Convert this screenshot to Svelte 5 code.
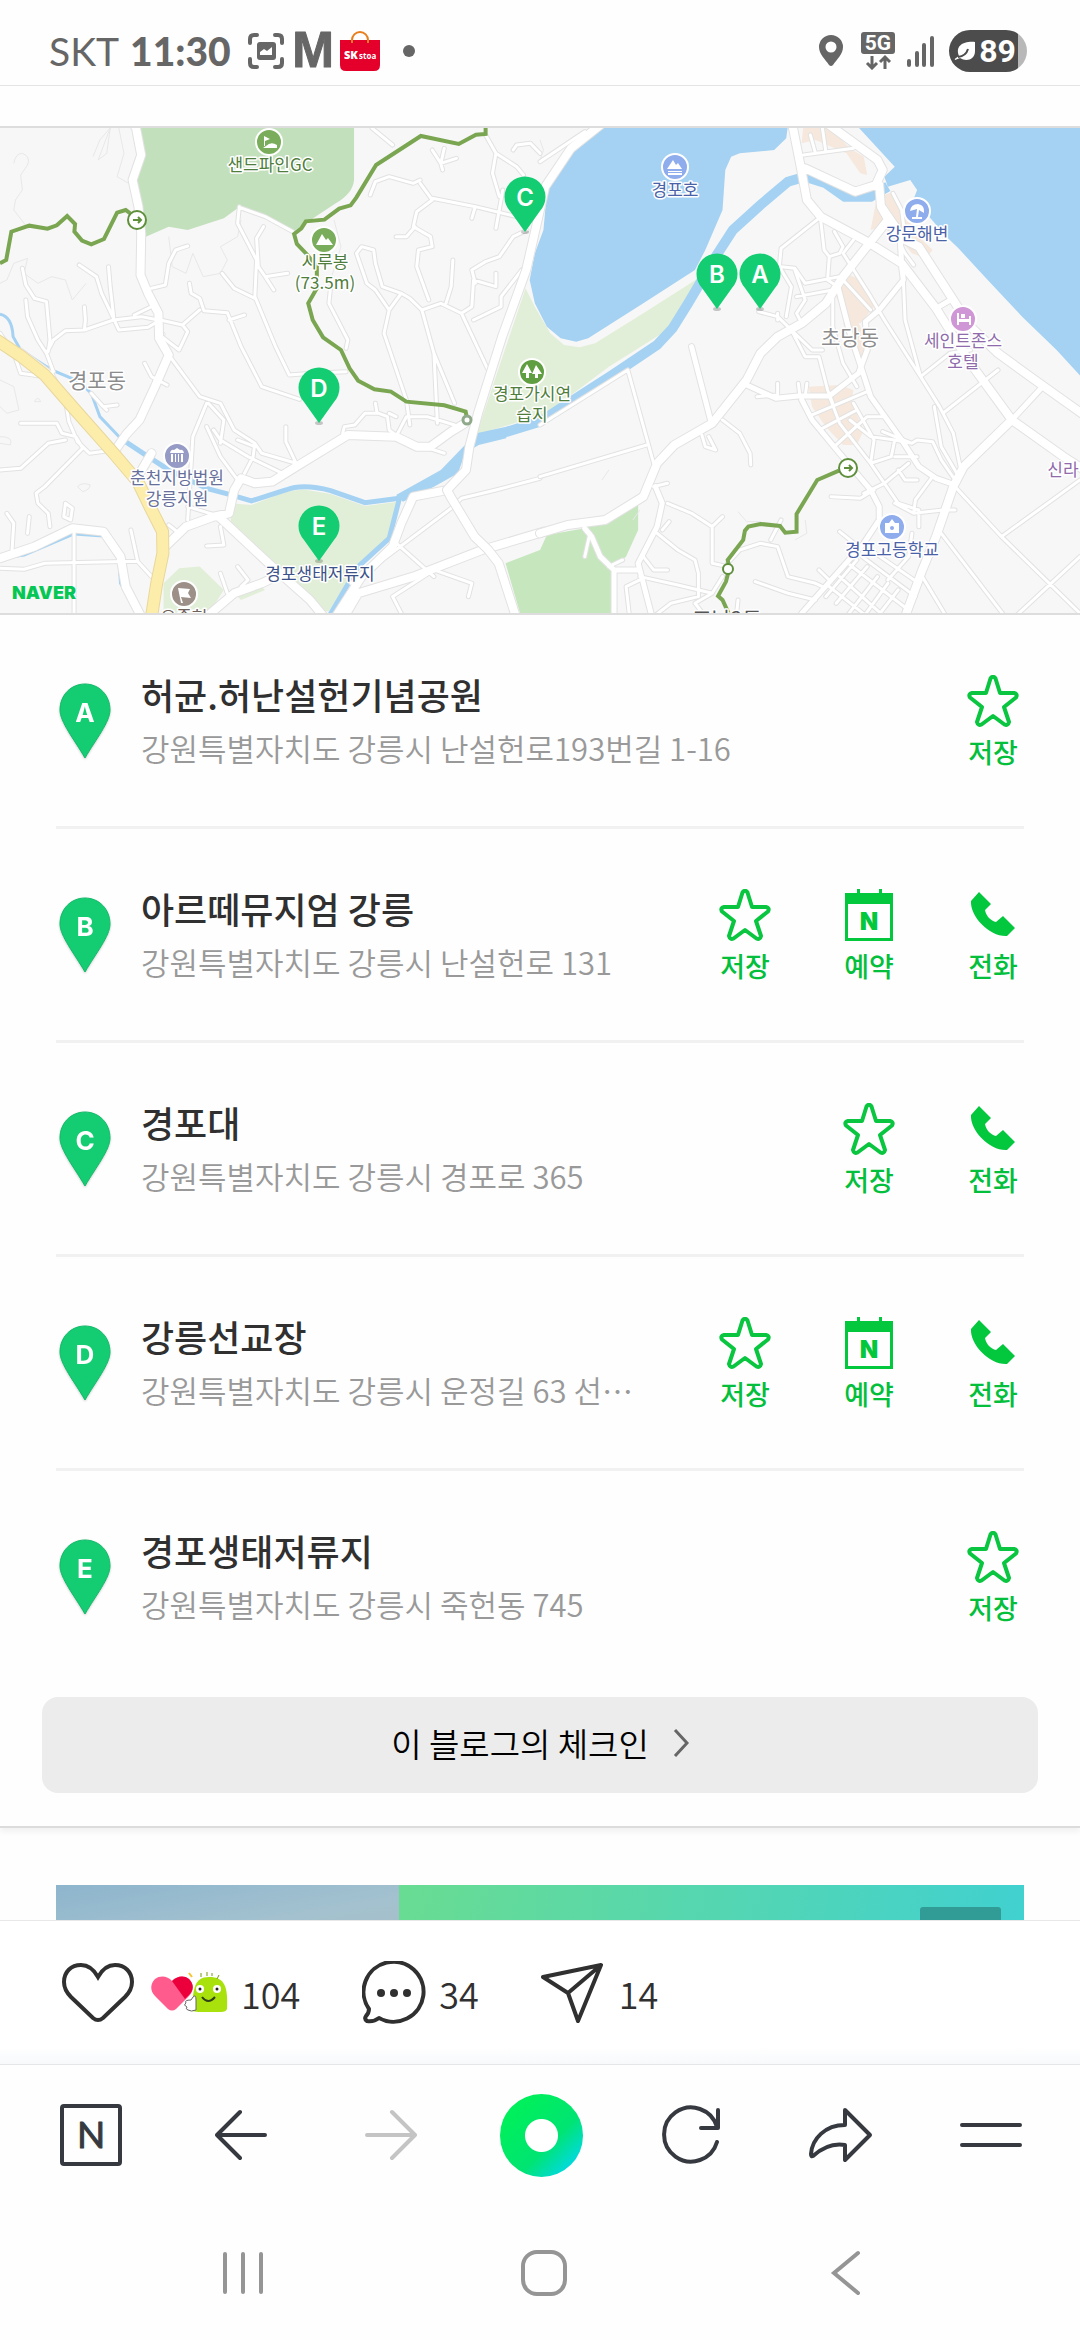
<script>
  /** Checked-in places of the post; each one also has a lettered pin on the map. */
  const places = [
    { id: 'A', name: '허균.허난설헌기념공원', address: '강원특별자치도 강릉시 난설헌로193번길 1-16', actions: ['save'] },
    { id: 'B', name: '아르떼뮤지엄 강릉', address: '강원특별자치도 강릉시 난설헌로 131', actions: ['save', 'book', 'call'] },
    { id: 'C', name: '경포대', address: '강원특별자치도 강릉시 경포로 365', actions: ['save', 'call'] },
    { id: 'D', name: '강릉선교장', address: '강원특별자치도 강릉시 운정길 63 선⋯', actions: ['save', 'book', 'call'] },
    { id: 'E', name: '경포생태저류지', address: '강원특별자치도 강릉시 죽헌동 745', actions: ['save'] },
  ];

  const actionLabels = { save: '저장', book: '예약', call: '전화' };

  const pins = [
    { id: 'C', x: 525, y: 112 },
    { id: 'B', x: 717, y: 189 },
    { id: 'A', x: 760, y: 189 },
    { id: 'D', x: 319, y: 303 },
    { id: 'E', x: 319, y: 441 },
  ];

  const labels = [
    { text: '샌드파인GC', x: 270, y: 51, kind: 'park' },
    { text: '시루봉', x: 325, y: 148, kind: 'park' },
    { text: '(73.5m)', x: 325, y: 169, kind: 'park' },
    { text: '경포가시연', x: 532, y: 280, kind: 'park' },
    { text: '습지', x: 532, y: 301, kind: 'park' },
    { text: '경포호', x: 675, y: 76, kind: 'water' },
    { text: '강문해변', x: 917, y: 120, kind: 'water' },
    { text: '경포고등학교', x: 892, y: 436, kind: 'water' },
    { text: '경포생태저류지', x: 320, y: 460, kind: 'navy' },
    { text: '춘천지방법원', x: 177, y: 364, kind: 'civic' },
    { text: '강릉지원', x: 177, y: 385, kind: 'civic' },
    { text: '세인트존스', x: 963, y: 227, kind: 'hotel' },
    { text: '호텔', x: 963, y: 248, kind: 'hotel' },
    { text: '신라', x: 1063, y: 356, kind: 'hotel' },
    { text: '오죽헌', x: 184, y: 503, kind: 'brown' },
    { text: '경포동', x: 97, y: 268, kind: 'area' },
    { text: '초당동', x: 850, y: 225, kind: 'area' },
    { text: '포남2동', x: 727, y: 507, kind: 'area dark' },
  ];

  // The two map tiles sit side by side and share one coordinate range.
  const west = {
    transform: 'scale(.3444 .3333)',
    major:
      'M380 0L395 24L410 105L385 180L402 260L410 340L408 465L430 520L460 580L462 655L490 705L450 800L405 900L365 945L335 990' +
      'M440 1000L400 1070M470 1290L540 1220L620 1190L665 1180L680 1110L700 1075L740 1090L790 1085L860 1040L1010 945L1150 950L1210 980L1250 980L1310 935L1350 910' +
      'M635 1190L780 1330L900 1440L940 1490M600 1490L680 1420L760 1390L820 1360' +
      'M1000 1490L1040 1420L1200 1370L1400 1290L1580 1235M1300 1110L1200 1130L1165 1210L1140 1280L1050 1370L975 1490' +
      'M0 1315L100 1280L210 1225L300 1235L350 1310L365 1400L410 1490',
    minor:
      'M65 445L75 495L100 535L135 545L145 660L140 695M75 540L80 590L110 660L135 700L155 755M135 700L155 660L190 632L245 630L330 600L410 590L460 600' +
      'M230 435L280 470L295 520L325 585L345 630L430 622L465 600L530 615L580 570M245 560L248 600L245 630M315 440L320 500L330 590M390 585L450 555' +
      'M440 505L480 495L490 430L510 390L545 378M550 490L555 520L580 535L592 572L660 578L700 680L760 800L870 838M665 600L710 585' +
      'M695 260L690 310L745 420L740 530L800 680L840 765L905 760L1005 755M695 262L770 290L850 335M765 320L745 355L750 440L770 470L835 460M645 460L680 505L740 535M770 470L795 510' +
      'M490 705L580 830L640 850L680 930L740 970L760 1000L860 1030M470 650L520 690L545 635L530 615M420 730L440 770L485 795M600 850L560 950L545 1200M600 920L640 1010L690 1080M620 930L640 960L720 1010L820 1060' +
      'M640 970L650 900L605 850M740 970L735 1010L710 1060M830 920L830 965L860 1030M690 960L740 980M995 940L1000 920L1030 915L1060 880L1100 880L1125 890L1130 930L1155 950M1090 850L1095 880M1130 880L1150 890' +
      'M960 500L955 550L1010 660L1005 685M1035 400L1050 380L1085 390L1090 430L1110 500L1165 520L1190 535L1225 570L1280 550L1340 580L1370 560L1375 480L1440 500L1440 460' +
      'M1035 400L1065 490L1090 510L1130 570L1115 640L1180 840L1190 915M1165 520L1130 570M1075 225L1090 185L1130 170L1200 190L1220 180M1220 190L1255 240L1210 275L1200 320L1250 350L1255 380L1215 390L1210 440L1245 540M1205 320L1180 350L1150 350' +
      'M1255 235L1380 260L1500 290M1380 260L1370 295M1460 210L1440 325M1290 85L1280 130L1325 115M1255 90L1280 130L1285 150M1530 330L1490 350L1450 410L1410 425L1370 450L1380 490M1225 570L1260 700L1320 850M1260 700L1270 910M1340 580L1415 745M1515 450L1455 530L1455 560L1375 600' +
      'M1315 420L1310 500L1295 550M1080 24L1140 75M1410 45L1440 100L1500 140L1520 165M1440 100L1430 160L1450 230M1490 90L1500 75L1540 70L1568 100' +
      'M60 910L165 910L180 940L220 950L240 985L130 1100L105 1120L110 1150L140 1180L145 1220M0 1050L60 1045L140 970L190 960M60 690L150 760L190 840L200 905L225 965L260 1000L330 990' +
      'M0 640L40 700L60 760L130 770M300 860L340 855M265 820L300 860L310 870M215 1225L215 1490M0 1345L70 1348L130 1330L360 1325L400 1325L440 1370M85 1190L80 1240M20 1180L40 1210L35 1290' +
      'M190 1150L210 1165L205 1200L185 1190L190 1150M380 1230L400 1325M490 1215L520 1240M545 1160L640 1190M600 1278L650 1275L640 1220M690 1340L720 1380L700 1400M640 1360L660 1420M1170 1490L1140 1430L1260 1350L1370 1390L1360 1430' +
      'M1140 1260L1260 1370M1310 1165L1020 1390M1310 1165L1340 1135L1440 1110L1568 1075M1230 980L1290 1000M1150 950L1180 890L1240 890L1320 915',
    contour:
      'M40 130Q45 100 65 100Q90 110 80 135L60 165L65 210L45 240L40 270L85 330M270 110L290 60L320 24M320 24L310 100L285 120ZM345 24L360 100L340 170L390 200' +
      'M0 490L20 480L40 430L80 415L70 460L110 490L150 470L190 480L210 540L250 490M490 350L500 440L540 460L560 400L590 470L640 460L660 420L640 380L690 350L700 300' +
      'M225 1100Q240 1085 262 1095Q260 1110 240 1115ZM0 780L40 800L55 870L20 880L0 860M0 950Q40 950 30 975L0 970M100 845Q110 825 118 845ZM460 620L480 640L470 680M960 480L990 380L970 300',
  };

  const east = {
    transform: 'translate(540 0) scale(.3444 .3333)',
    major:
      'M175 15L90 85L15 200L-20 360L-40 450L-110 650L-180 880L-205 980L-215 1050L-270 1110L-260 1130L-190 1250L-150 1290L-120 1330L-70 1490' +
      'M0 1240L80 1215L190 1200L300 1130L340 1030L390 975L500 910L600 780L640 700L690 650L760 610L830 550L880 470L960 365L1010 300' +
      'M732 10L755 130L775 240L815 290L950 365L1050 430L1150 565L1250 730L1370 900L1520 1010L1580 1050M1370 900L1230 1040L1200 1100L1150 1250L1110 1350L1060 1490' +
      'M770 145L915 215L975 195L995 150L980 120L840 15M985 195L990 260L1040 350L1100 380L1200 540L1250 620L1330 700L1450 790L1580 885',
    mid:
      'M865 500L900 640L935 750L960 830L1050 960L1100 1040L1150 1075L1205 1095M600 795L685 835L750 828L840 828L925 760L950 690L945 605' +
      'M760 840L790 900L870 1000L960 1110L985 1160L985 1200L940 1270L880 1340L760 1480M1050 440L1055 480L985 570L945 605M440 680L495 900M1370 900L1455 805M1045 340L1050 430' +
      'M335 1100L355 1150L340 1220L285 1330L325 1490M130 1225L150 1250L175 1310L215 1350L215 1490M215 1350L285 1350M1150 565L1200 535',
    minor:
      'M255 750L330 1030M0 1070L310 975M0 915L255 750M470 945L480 980L510 990L490 950M530 900L580 940L610 1000L612 1035M810 295L700 385L695 440L730 500L715 590M815 300L825 390L840 410L835 480L865 500M855 335L880 380L870 400L840 410' +
      'M700 440L740 445L770 490L870 470M745 530L850 510M740 450L770 540L745 580L760 610M635 575L690 590L730 630L790 690L820 690M730 630L770 710L810 710L835 810L850 850M690 580L690 600M765 105L910 85M785 45L800 100M820 24L830 95' +
      'M910 360L880 400L960 530L1000 600L1105 770L1160 860L1200 940L1220 1040M1055 480L1060 600L1105 770M1105 770L1190 700L1250 690M1170 880L1330 750M1145 860L1165 980L1210 1060M880 480L960 570M850 520L850 620L880 730L920 800' +
      'M840 828L870 910L960 1030L1040 1150L1100 1170L1100 1220M790 885L950 815M820 925L920 870M860 975L950 890L1000 890M910 850L970 960L960 1030M900 900L960 950L1030 960L1080 970L1095 960L1140 965L1165 1020L1205 1080M1030 960L1020 1010L960 1030' +
      'M995 935L1080 970M1095 1010L1030 1010M1070 1030L1000 1090L940 1120M1040 1050L1060 1080L1095 1080M1140 1070L1090 1140L1085 1180L1170 1170L1205 1170M845 1130L930 1135L970 1110M1030 1150L1085 1180' +
      'M1205 1100L1340 1250L1568 1480M1340 1250L1568 1080M1165 1240L1350 1490M1568 1310L1380 1490M1110 1370L1180 1490M1040 360L1060 400L1085 435M1000 260L1060 350L1050 270L1025 220' +
      'M370 1150L440 1180L500 1220L530 1190M355 1230L375 1205M500 1220L500 1330L545 1340M545 1330L580 1290L640 1270L690 1280L720 1370L800 1390L820 1400M340 1240L400 1290L450 1320L460 1360L460 1430M300 1310L330 1350L370 1350M290 1370L400 1395L500 1420L530 1370' +
      'M290 1380L250 1400L260 1490M460 1430L380 1450L330 1490M500 1420L450 1450L480 1490M625 1385L720 1420L800 1440M700 1200L670 1260M870 1235L930 1285M810 1350L840 1380M575 1440L570 1490M630 830L690 825L690 790M750 790L755 830M775 790L770 830' +
      'M840 1400L950 1490M870 1370L1000 1490M900 1335L1070 1470M935 1310L1090 1430M960 1290L1100 1390M980 1370L890 1490M1010 1390L940 1490M1040 1410L980 1490M950 1340L860 1450M920 1320L830 1430M1070 1310L1010 1380M1080 1240L1070 1310M0 125L130 35M330 1100L370 1090' +
      'M145 1240L130 1310M200 1340L240 1320',
    contour:
      'M575 1175L600 1205L640 1205L660 1220M770 1200L775 1240L740 1260M270 1200L290 1170M0 60L10 90L0 120M180 1080L200 1050',
  };
</script>

{#snippet roads(tile)}
  <g transform={tile.transform}>
    <path class="contour" d={tile.contour} />
    <path class="road minor casing" d={tile.minor} />
    {#if tile.mid}<path class="road mid casing" d={tile.mid} />{/if}
    <path class="road major casing" d={tile.major} />
    <path class="road minor" d={tile.minor} />
    {#if tile.mid}<path class="road mid" d={tile.mid} />{/if}
    <path class="road major" d={tile.major} />
  </g>
{/snippet}

<div class="app">
  <header class="status">
    <span class="carrier">SKT</span>
    <time class="clock">11:30</time>
    <svg class="capture" width="36" height="36" viewBox="0 0 36 36" aria-hidden="true">
      <path d="M2 10V6q0-4 4-4h3M27 2h3q4 0 4 4v4M34 26v4q0 4-4 4h-3M9 34H6q-4 0-4-4v-4" fill="none" stroke="#666" stroke-width="4" stroke-linecap="round" />
      <rect x="9" y="9" width="19" height="18" rx="3" fill="#666" />
      <path d="M12 22v-3l4-3 3 2 5-4v8z" fill="#fff" />
    </svg>
    <svg class="mail" width="42" height="40" viewBox="0 0 42 40" aria-hidden="true">
      <text x="21" y="36" text-anchor="middle">M</text>
    </svg>
    <svg class="bag" width="40" height="40" viewBox="0 0 40 40" aria-hidden="true">
      <path d="M0 9h40v25q0 6-6 6H6q-6 0-6-6z" fill="#e4002b" />
      <path d="M12 12V9a8 8 0 0 1 16 0v3" fill="none" stroke="#e87f1e" stroke-width="2" />
      <text x="4" y="28" class="sk">SK</text>
      <text x="19" y="28" class="stoa">stoa</text>
    </svg>
    <span class="dot"></span>

    <span class="status-end">
      <svg width="26" height="32" viewBox="0 0 26 32" aria-hidden="true">
        <path d="M13 0a12 12 0 0 1 12 12c0 7-6 12-10 18q-2 2-4 0C7 24 1 19 1 12A12 12 0 0 1 13 0zm0 6.500a5.500 5.500 0 1 0 0 11 5.500 5.500 0 0 0 0-11z" fill="#666" fill-rule="evenodd" />
      </svg>
      <svg class="network" width="34" height="38" viewBox="0 0 34 38" aria-hidden="true">
        <rect width="34" height="22" rx="3" fill="#666" />
        <text x="17" y="18" text-anchor="middle">5G</text>
        <path d="M11 24v12M6 31l5 5 5-5M24 37V25M19 30l5-5 5 5" fill="none" stroke="#666" stroke-width="3" />
      </svg>
      <svg class="signal" width="28" height="32" viewBox="0 0 28 32" aria-hidden="true">
        <path d="M2 30v-4M10 30V18M17 30V10M25 30V3" stroke="#666" stroke-width="4" stroke-linecap="round" />
      </svg>
      <span class="battery">
        <svg width="22" height="22" viewBox="0 0 22 22" aria-hidden="true">
          <path d="M21 2v9c0 9-9 11-15 7l-5 2q-1-1 1-2l3-2C1 6 9 1 21 2z" fill="#fff" />
          <path d="M4 17q8-1 10-8" fill="none" stroke="#4c4c4c" stroke-width="2" />
        </svg>
        89
      </span>
    </span>
  </header>

  <main>
    <article class="map-card">
      <svg class="map" viewBox="0 8 1080 485" role="img" aria-label="강릉시 지도">
        <defs>
          <path id="pin" d="M0 0L-15-21A20.500 20.500 0 1 1 15-21Z" />
        </defs>
        <rect y="8" width="1080" height="485" fill="#f7f7f7" />

        <g transform={west.transform}>
          <path d="M390 0H1028V180Q1025 220 975 250L850 335L780 300L700 257L650 295L545 330L490 320L420 352L410 250L385 170L415 105Z" fill="#c3e0bc" />
          <path d="M670 1150L730 1155L830 1115L880 1108L960 1122L1060 1158L1155 1145L1130 1250L1035 1340L955 1475L920 1470L800 1345L670 1210Z" fill="#e2efd8" />
          <path d="M475 1490V1390L520 1345L580 1340L650 1410L600 1490ZM690 1430L750 1395L770 1410L700 1440Z" fill="#e2efd8" />
          <path class="stream thin" d="M0 583Q35 590 38 650L60 690L150 750L230 785L265 820L290 890L350 955" />
          <path class="stream" d="M350 955L430 1010L490 1050L600 1105L660 1122L730 1143L830 1110Q880 1090 960 1112L1060 1148L1160 1135L1130 1255L1040 1340L955 1490" />
          <path class="stream thin" d="M0 1315L70 1305L215 1242L300 1248L345 1320L350 1390L405 1490" />
          <path d="M1150 1125L1280 1050L1355 970L1380 935L1470 935V955L1390 975L1350 1000L1330 1060L1260 1100L1170 1145Z" fill="#a7d3f2" />
        </g>
        <g transform={east.transform}>
          <path d="M-42 505L-15 560L30 640L70 675L115 682L160 670L300 580L455 478L410 560L370 630L200 740L20 880L-185 945Z" fill="#e2efd8" />
          <path d="M210 0L95 100L20 215L10 330L-15 400L-30 480L-15 550L20 620L60 655L105 665L140 655L300 550L450 450L480 390L530 270L538 150L555 110L580 100L680 90L715 55L722 0Z" fill="#a5d2f2" />
          <path d="M905 0L1030 140L1000 170L1010 200L1075 180L1095 210L1080 250L1130 290L1180 350L1215 385L1300 480L1400 590L1500 690L1580 780V0Z" fill="#a5d2f2" />
          <path class="river" d="M-185 955L-95 935L0 905L60 865L210 765L340 675L385 625L430 550L510 410L560 330L640 255L720 185L770 170L830 190L885 230H960L1010 200" />
          <path d="M-100 1330L0 1290L20 1245L130 1225L210 1190L285 1140V1230L250 1310L215 1340V1490H-55Z" fill="#c6e6be" />
          <path d="M765 10H830L900 85L940 110L950 165L930 160L890 100L800 60L760 70ZM1000 225L1025 215L1060 280L1100 350L1140 390L1120 415L1080 400L1040 350L990 320L960 330L975 250ZM900 465L930 480L970 560L930 610L900 605L860 530ZM880 610L920 600L960 680L935 735ZM780 800L870 795L910 810L905 850L940 930L920 975H880L830 920L790 860Z" fill="#f6e8dc" />
        </g>
        {@render roads(west)}
        {@render roads(east)}

        <g transform={west.transform}>
          <path class="highway edge" d="M-10 660L60 708L130 765L210 860L330 1000L400 1085L440 1170L472 1235L473 1300L455 1390L440 1490" />
          <path class="highway" d="M-10 660L60 708L130 765L210 860L330 1000L400 1085L440 1170L472 1235L473 1300L455 1390L440 1490" />
          <path class="trail" d="M0 430L18 420L33 335L85 317L138 326L165 316L195 288L218 312L216 335L238 362L265 373L302 357L340 278L365 270L378 280" />
          <path class="trail" d="M1410 0V42L1382 44L1332 72L1222 48L1092 135L1035 232L1018 256L985 266L942 299L888 304L875 325L854 342L862 372L890 402L920 440V505L895 550L908 600L938 652L990 690L1015 745L1040 782L1087 808L1135 815L1180 845L1290 856L1352 875L1355 890" />
        </g>
        <g transform={east.transform}>
          <path class="trail" d="M868 1052L805 1080L745 1182V1235L712 1238L697 1218L640 1212L605 1220L595 1232L590 1260L545 1320L550 1345L540 1385L517 1428L530 1440L552 1490" />
        </g>

        <g fill="#fff" stroke="#5f8f3c" stroke-width="2">
          <circle cx="137" cy="100" r="9" />
          <circle cx="848" cy="348" r="9" />
          <circle cx="728" cy="449" r="5" />
          <circle cx="467" cy="300" r="4" stroke="#8fa98a" stroke-width="3" />
          <path d="M133 100h8M138 97l3 3-3 3M844 348h8M849 345l3 3-3 3" fill="none" />
        </g>

        <g class="poi" stroke="#fff">
          <circle cx="269" cy="22" r="13" fill="#79ad5c" />
          <circle cx="324" cy="120" r="13" fill="#79ad5c" />
          <circle cx="532" cy="252" r="13" fill="#5f9e41" />
          <circle cx="675" cy="47" r="13" fill="#8facec" />
          <circle cx="917" cy="91" r="13" fill="#8facec" />
          <circle cx="892" cy="407" r="13" fill="#8facec" />
          <circle cx="177" cy="336" r="13" fill="#959bc4" />
          <circle cx="963" cy="199" r="13" fill="#cf97d6" />
          <circle cx="184" cy="474" r="13" fill="#9c9088" />
        </g>
        <g fill="#fff">
          <path d="M264 16l6 3-5 2v5h-1zM266 26q5-5 11-1v3h-14z" />
          <path d="M316 125l6-11 4 6 2-2 5 7zM667 49l6-9 3 5 2-2 4 6zM668 51h14v1h-14zM668 53h14v2h-14z" />
          <path d="M527 244l5 9h-3v5h-3v-5h-4zM536 245l6 9h-4v4h-3v-4h-3z" />
          <path d="M910 91q1-7 8-7 7 1 6 9l-5-3-1 7h4v2h-10v-2h4l1-8z" />
          <path d="M885 403h4l3-4 3 4h4v10h-14z" />
          <path d="M170 333q1-4 4-3l3-2 3 2q3-1 4 3zM171 334h2v8h-2zM175 334h1v8h-1zM178 334h1v8h-1zM181 334h2v8h-2z" />
          <path d="M957 193h2v6h10v-3h2v9h-2v-3h-10v3h-2zM961 194h4v4h-4z" />
          <path d="M178 468l12 1-2 4 3 5-10-1 2 6h-2z" />
        </g>
        <circle cx="892" cy="408" r="2" fill="#8facec" />

        {#each labels as label}
          <text class="label {label.kind}" x={label.x} y={label.y}>{label.text}</text>
        {/each}
        {#each pins as pin (pin.id)}
          <g transform="translate({pin.x} {pin.y})">
            <ellipse cy="0" rx="4" ry="2" fill="#0003" />
            <use href="#pin" fill="#14cd73" />
            <text class="pin-letter" y="-26">{pin.id}</text>
          </g>
        {/each}
        <text class="brand" x="12" y="479">NAVER</text>
      </svg>

      <ul class="places">
        {#each places as place (place.id)}
          <li class="place">
            <svg class="marker" width="52" height="76" viewBox="0 0 52 76" aria-hidden="true">
              <path d="M26 1C40 1 51 12 51 27C51 39 37 56 26 75C15 56 1 39 1 27C1 12 12 1 26 1Z" fill="#14cd73" stroke="#10b968" />
              <text x="26" y="39">{place.id}</text>
            </svg>
            <div class="info">
              <h2>{place.name}</h2>
              <p>{place.address}</p>
            </div>
            <div class="actions">
              {#each place.actions as action}
                <button type="button" class="action">
                  <svg width="52" height="52" viewBox="0 0 52 52" aria-hidden="true">
                    {#if action === 'save'}
                      <path d="M23.500 3.500Q26 0 28.500 3.500L33 18H47Q51 19 49 22.500L37 32L42 47Q41 51 37.500 49.500L26 41L14.500 49.500Q11 51 10 47L15 32L3 22.500Q1 19 5 18H19Z" fill="none" stroke="#0ac53f" stroke-width="4" stroke-linejoin="round" />
                    {:else if action === 'book'}
                      <path d="M2 4h12V0h3v4h19V0h3v4h11v48H2zM5 15v34h42V15z" fill="#03c73c" fill-rule="evenodd" />
                      <text x="26" y="41">N</text>
                    {:else}
                      <path d="M12 3L24 15L18 21C19 27 24 32 29 33L36 27L48 39L40 47C23 48 3 28 4 12Z" fill="#03c73c" />
                    {/if}
                  </svg>
                  <span>{actionLabels[action]}</span>
                </button>
              {/each}
            </div>
          </li>
        {/each}
      </ul>

      <button type="button" class="checkin">
        이 블로그의 체크인
        <svg width="16" height="28" viewBox="0 0 16 28" aria-hidden="true">
          <path d="M2 1L14 14L2 27" fill="none" stroke="#666" stroke-width="3" />
        </svg>
      </button>
    </article>

    <div class="banner">
      <div class="photo"></div>
      <div class="promo"><span class="tag"></span></div>
    </div>
  </main>

  <div class="reactions">
    <button type="button" class="like" aria-label="공감">
      <svg width="72" height="60" viewBox="0 0 72 60" aria-hidden="true">
        <path d="M36 14C31 5 26 2 19 2C9 2 2 9 2 19C2 25 5 30 9 34L31 55Q36 59 41 55L63 34C67 30 70 25 70 19C70 9 63 2 53 2C46 2 41 5 36 14Z" fill="none" stroke="#303030" stroke-width="4" />
      </svg>
    </button>
    <button type="button" class="count">
      <svg width="77" height="42" viewBox="0 0 77 42" aria-hidden="true">
        <path d="M21 9C17 4 9 3 4 7C-1 12-1 19 4 24L17 37Q21 40 25 37L38 24C43 19 43 12 38 7C33 3 26 4 21 9Z" fill="#ff5c8d" />
        <path d="M21 9C26 4 33 3 38 7C43 12 43 18 38 23L34 27Z" fill="#eb003b" />
        <path d="M41 39C42 17 43 5 58 5C74 5 77 15 76 37Q75 40 70 40H47Z" fill="#a8e10c" />
        <path d="M50 5V1M56 4V0M61 4V1M66 7l2-4" stroke="#739b12" stroke-width="1" />
        <circle cx="49" cy="17" r="4" fill="#fff" /><circle cx="66" cy="17" r="4" fill="#fff" />
        <circle cx="49" cy="17" r="1.500" fill="#222" /><circle cx="66" cy="17" r="1.500" fill="#222" />
        <path d="M51 25q6 8 13 0" fill="none" stroke="#30401a" stroke-width="2" />
        <path d="M42 25q3-3 3 3v10q-5 2-8 0-3-1-1-3-4-2-1-4-2-3 5-3z" fill="#fff" stroke="#666" />
        <path d="M38 1l3 4" stroke="#f5c430" stroke-width="2" />
      </svg>
      104
    </button>
    <button type="button" class="count">
      <svg width="64" height="64" viewBox="0 0 64 64" aria-hidden="true">
        <path d="M7 48A30 30 0 1 1 17 57Q12 61 5 60Q2 58 4 55Q7 52 7 48Z" fill="none" stroke="#303030" stroke-width="4" stroke-linejoin="round" />
        <circle cx="19" cy="32" r="4" fill="#303030" /><circle cx="32" cy="32" r="4" fill="#303030" /><circle cx="45" cy="32" r="4" fill="#303030" />
      </svg>
      34
    </button>
    <button type="button" class="count send">
      <svg width="62" height="60" viewBox="0 0 62 60" aria-hidden="true">
        <path d="M60 2L2 14L27 30L37 58ZM60 2L27 30" fill="none" stroke="#303030" stroke-width="4" stroke-linejoin="round" />
      </svg>
      14
    </button>
  </div>

  <nav class="toolbar" aria-label="도구 막대">
    <button type="button" aria-label="네이버 홈">
      <svg width="64" height="64" viewBox="0 0 64 64" aria-hidden="true">
        <rect x="3" y="3" width="58" height="58" rx="2" fill="none" stroke="#363a40" stroke-width="4" />
        <text class="home-n" x="32" y="45">N</text>
      </svg>
    </button>
    <button type="button" aria-label="뒤로">
      <svg width="52" height="52" viewBox="0 0 52 52" aria-hidden="true">
        <path d="M25 3L2 26L25 49M2 26H50" fill="none" stroke="#363a40" stroke-width="4" stroke-linecap="round" stroke-linejoin="round" />
      </svg>
    </button>
    <button type="button" aria-label="앞으로" disabled>
      <svg width="52" height="52" viewBox="0 0 52 52" aria-hidden="true">
        <path d="M27 3L50 26L27 49M50 26H2" fill="none" stroke="#c4c4c4" stroke-width="4" stroke-linecap="round" stroke-linejoin="round" />
      </svg>
    </button>
    <button type="button" aria-label="그린닷">
      <span class="green-dot"></span>
    </button>
    <button type="button" aria-label="새로고침">
      <svg width="60" height="60" viewBox="0 0 60 60" aria-hidden="true">
        <path d="M56 37A27 27 0 1 1 56 22M57 5V23H40" fill="none" stroke="#363a40" stroke-width="4" stroke-linecap="round" stroke-linejoin="round" />
      </svg>
    </button>
    <button type="button" aria-label="공유">
      <svg width="64" height="56" viewBox="0 0 64 56" aria-hidden="true">
        <path d="M36 3L61 28L36 53V38C24 36 14 40 4 49Q2 50 2 47C3 32 16 18 36 18Z" fill="none" stroke="#363a40" stroke-width="4" stroke-linejoin="round" />
      </svg>
    </button>
    <button type="button" aria-label="메뉴">
      <svg width="62" height="26" viewBox="0 0 62 26" aria-hidden="true">
        <path d="M2 3H60M2 23H60" stroke="#363a40" stroke-width="4" stroke-linecap="round" />
      </svg>
    </button>
  </nav>

  <nav class="system" aria-label="시스템 탐색">
    <button type="button" aria-label="최근 앱">
      <svg width="44" height="48" viewBox="0 0 44 48" aria-hidden="true">
        <path d="M4 5V43M22 5V43M40 5V43" stroke="#959595" stroke-width="4" stroke-linecap="round" />
      </svg>
    </button>
    <button type="button" aria-label="홈">
      <svg width="48" height="48" viewBox="0 0 48 48" aria-hidden="true">
        <rect x="3" y="3" width="42" height="42" rx="14" fill="none" stroke="#959595" stroke-width="4" />
      </svg>
    </button>
    <button type="button" aria-label="이전">
      <svg width="32" height="48" viewBox="0 0 32 48" aria-hidden="true">
        <path d="M29 4L5 24L29 44" fill="none" stroke="#959595" stroke-width="4" stroke-linecap="round" />
      </svg>
    </button>
  </nav>
</div>

<style>
  :global(body) {
    margin: 0;
    background: #fff;
  }

  .app {
    display: flex;
    flex-direction: column;
    height: 100vh;
    background: #fefefe;
    color: #303030;
    font-family: 'Noto Sans CJK KR', sans-serif;
  }

  button {
    display: flex;
    align-items: center;
    justify-content: center;
    padding: 0;
    border: 0;
    background: transparent;
    color: inherit;
    font: inherit;
    cursor: pointer;
  }
  svg { flex-shrink: 0; }

  /* Status bar */

  .status {
    display: flex;
    align-items: center;
    flex-shrink: 0;
    height: 69px;
    padding: 16px 53px 0 49px;
    border-bottom: 1px solid #e4e4e4;
    color: #666;
    font-family: Lato, sans-serif;
    font-size: 39px;
  }
  .clock { margin-left: 11px; font-weight: 900; }
  .capture { margin-left: 17px; }
  .mail { margin-left: 8px; overflow: visible; }
  .mail text {
    font: 700 50px 'Liberation Sans', sans-serif;
    fill: #666;
    stroke: #666;
    stroke-width: 1px;
    stroke-linejoin: round;
  }
  .bag { margin-left: 6px; }
  .bag text { fill: #fff; }
  .sk { font: 900 11px 'Open Sans', sans-serif; }
  .stoa { font: 700 8px 'Open Sans', sans-serif; }
  .dot {
    width: 12px;
    height: 12px;
    margin-left: 23px;
    border-radius: 50%;
    background: #666;
  }
  .status-end {
    display: flex;
    align-items: center;
    margin-left: auto;
  }
  .network { margin-left: 17px; }
  .network text { font: 700 21px Roboto, sans-serif; fill: #fff; }
  .signal { margin-left: 12px; }
  .battery {
    display: flex;
    align-items: center;
    justify-content: center;
    box-sizing: border-box;
    width: 78px;
    height: 42px;
    margin-left: 14px;
    padding-right: 6px;
    gap: 3px;
    border-radius: 21px;
    background: linear-gradient(90deg, #4c4c4c 88%, #b8b8b8 88%);
    color: #fff;
    font: 700 32px Roboto, sans-serif;
  }

  /* Content */

  main {
    flex: 1;
    min-height: 0;
    padding-top: 40px;
    overflow: hidden;
  }

  .map-card {
    padding-bottom: 33px;
    border-top: 2px solid #ddd;
    border-bottom: 2px solid #dcdcdc;
    box-shadow: 0 4px 6px #0000000d;
  }

  .map {
    display: block;
    width: 100%;
    height: auto;
    border-bottom: 2px solid #ddd;
  }
  .map path { vector-effect: non-scaling-stroke; }
  .contour { fill: none; stroke: #e8e8e8; stroke-width: 1px; }
  .road {
    fill: none;
    stroke: #fff;
    stroke-linecap: round;
    stroke-linejoin: round;
  }
  .minor { stroke-width: 3px; }
  .minor.casing { stroke-width: 5px; }
  .mid { stroke-width: 5px; }
  .mid.casing { stroke-width: 7px; }
  .major { stroke-width: 8px; }
  .major.casing { stroke-width: 10px; }
  .road.casing { stroke: #e2e2e2; }
  .stream { fill: none; stroke: #a5d2f2; stroke-width: 5px; }
  .stream.thin { stroke-width: 3px; }
  .river { fill: none; stroke: #a5d2f2; stroke-width: 10px; }
  .highway { fill: none; stroke: #fcedaa; stroke-width: 11px; }
  .highway.edge { stroke: #e8d79c; stroke-width: 13px; }
  .trail { fill: none; stroke: #7aa652; stroke-width: 4px; }
  .poi { stroke-width: 2px; }

  .label {
    font-size: 17px;
    font-weight: 400;
    text-anchor: middle;
    paint-order: stroke;
    stroke: #fff;
    stroke-width: 3px;
    stroke-linejoin: round;
  }
  .park { fill: #4f7d3c; }
  .water { fill: #4a62a8; }
  .navy { fill: #3d5288; }
  .civic { fill: #66709a; }
  .hotel { fill: #8f6bab; }
  .brown { fill: #6f625a; }
  .area { font-size: 21px; fill: #8c8c8c; }
  .dark { fill: #555; }
  .brand {
    font: 900 18px Inter, sans-serif;
    fill: #06c755;
  }
  .pin-letter {
    font: 600 24px Inter, sans-serif;
    fill: #fff;
    text-anchor: middle;
  }

  .places {
    margin: 0;
    padding: 0 56px;
    list-style: none;
  }
  .place {
    display: flex;
    align-items: center;
    gap: 30px;
    padding: 60px 0 60px 3px;
  }
  .place:not(:last-child) { border-bottom: 3px solid #f1f1f1; }
  .marker { filter: drop-shadow(0 1px 1px #0003); }
  .marker text {
    font: 700 26px Inter, sans-serif;
    fill: #fff;
    text-anchor: middle;
  }
  .info { flex: 1; min-width: 0; margin: -8px 0; }
  .info h2, .info p {
    margin: 0;
    line-height: 53px;
    white-space: nowrap;
  }
  .info h2 { font-size: 36px; font-weight: 500; }
  .info p { color: #999; font-size: 31px; font-weight: 350; }

  .actions { display: flex; gap: 62px; }
  .action {
    flex-direction: column;
    gap: 11px;
    width: 62px;
    color: #03bf3c;
    font-size: 27px;
    font-weight: 500;
    line-height: 28px;
  }
  .action text {
    font: 900 24px Inter, sans-serif;
    fill: #03c73c;
    text-anchor: middle;
  }

  .checkin {
    width: calc(100% - 84px);
    height: 96px;
    margin: 15px 42px 0;
    padding-bottom: 4px;
    gap: 24px;
    border-radius: 16px;
    background: #ececec;
    color: #000;
    font-size: 33px;
    font-weight: 350;
    line-height: 48px;
  }

  .banner {
    display: flex;
    height: 180px;
    margin: 57px 56px 0;
  }
  .photo {
    width: 343px;
    background: linear-gradient(170deg, #8db5cd, #a3c1cf 30%, #a9bdc2 60%);
  }
  .promo {
    display: flex;
    flex: 1;
    align-items: flex-start;
    justify-content: flex-end;
    padding: 22px 23px;
    background: linear-gradient(100deg, #69dc92, #3fd0d2);
  }
  .tag {
    width: 81px;
    height: 40px;
    border-radius: 3px;
    background: #319c96;
  }

  /* Bottom bars */

  .reactions {
    display: flex;
    align-items: center;
    flex-shrink: 0;
    height: 143px;
    padding: 0 62px;
    border-top: 1px solid #e8e8e8;
    border-bottom: 1px solid #e4e6e8;
    background: linear-gradient(#fff 88%, #f7f9fb);
  }
  .like { margin-right: 17px; }
  .count {
    gap: 13px;
    margin-right: 62px;
    font-size: 36px;
    font-weight: 350;
    line-height: 48px;
  }
  .send { gap: 16px; }

  .toolbar {
    display: grid;
    grid-template-columns: repeat(7, 1fr);
    flex-shrink: 0;
    height: 140px;
    padding: 0 14px 0 16px;
  }
  .home-n {
    font: 400 37px Lato, sans-serif;
    fill: #363a40;
    stroke: #363a40;
    stroke-width: 1px;
    stroke-linejoin: round;
    text-anchor: middle;
  }
  .green-dot {
    width: 83px;
    height: 83px;
    border-radius: 50%;
    background: radial-gradient(circle, #fff 16px, transparent 17px), linear-gradient(135deg, #00ef5c 20%, #00e472 60%, #00d8ee 90%);
  }

  .system {
    display: grid;
    grid-template-columns: repeat(3, 1fr);
    flex-shrink: 0;
    height: 135px;
    padding: 0 84px 0 92px;
  }
</style>
